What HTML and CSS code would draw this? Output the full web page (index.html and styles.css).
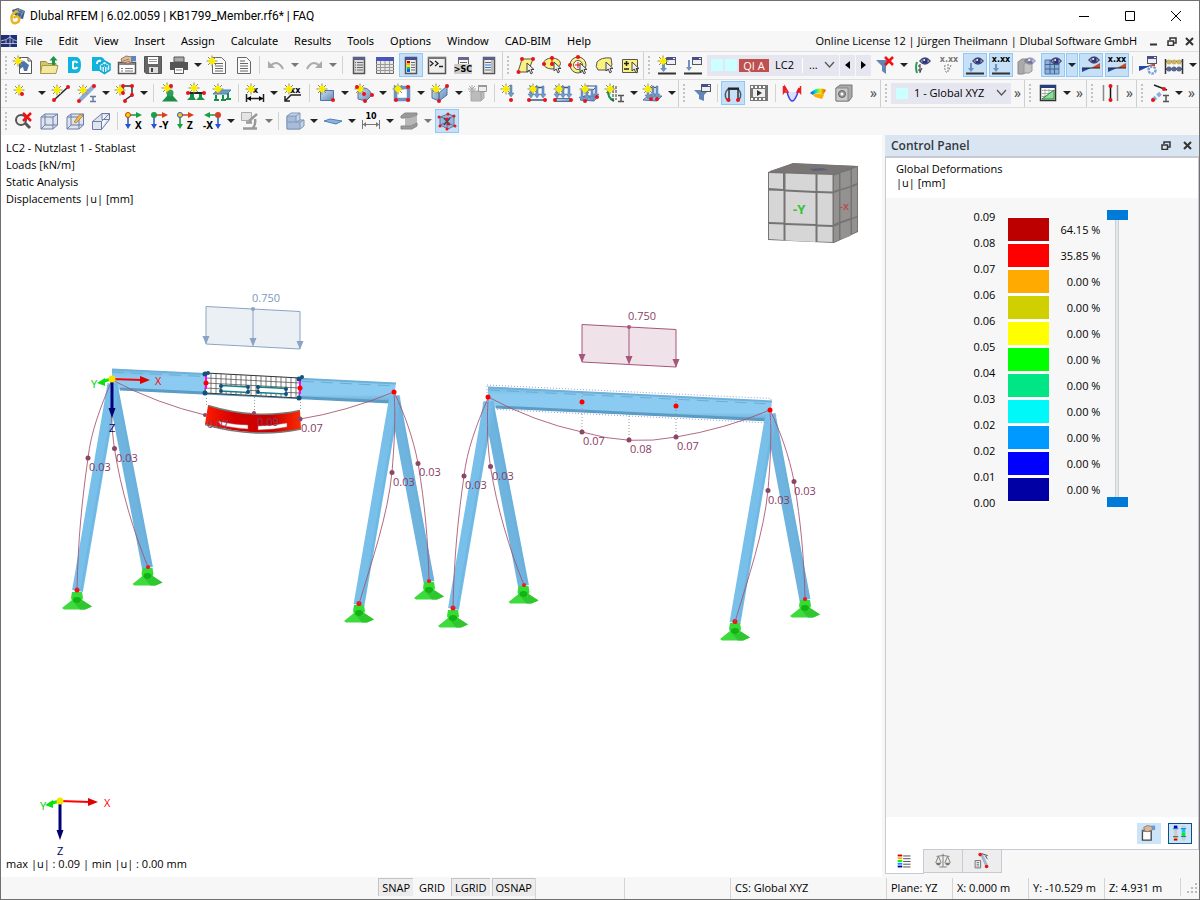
FILE: index.html
```html
<!DOCTYPE html>
<html lang="en">
<head>
<meta charset="utf-8">
<title>Dlubal RFEM</title>
<link rel="stylesheet" href="styles.css">
</head>
<body>
<svg class="defs" aria-hidden="true">
  <defs>
    <g id="star"><path d="M0-5.500V5.500M-5.500 0H5.500M-4-4L4 4M4-4L-4 4" stroke="#8d8a5c"/><circle r="3" fill="#fff200"/><path d="M0-4V4M-4 0H4" stroke="#f4e600"/></g>
    <circle id="node" r="2" fill="#e8141c"/>
    <g id="win"><rect x=".5" y=".5" width="9" height="7" fill="#eceff4" stroke="#555"/><path d="M0 0H10V3H0Z" fill="#4a4f86"/><path d="M7 1H9V2H7Z" fill="#fff"/></g>
    <g id="eye"><path d="M-5 0Q0-6 5 0Q0 6-5 0Z" fill="#fff" stroke="#4b4b78" stroke-width="1.5"/><circle r="2.8" fill="#2c347c"/><circle cx="-.8" cy="-1" r="1" fill="#fff"/></g>
    <path id="cursor" d="M0 0V9L2.200 7 4 11 5.500 10 4 6.500H7Z" fill="#eee" stroke="#444"/>
    <path id="load" d="M-1 0H1V8H3L0 12-3 8H-1Z" fill="#6f9bd0" stroke="#4f739f" stroke-width=".5"/>
    <path id="chev" d="M1 1L5.500 6 10 1" fill="none" stroke="#555" stroke-width="1.200"/>
    <g id="restore" fill="none" stroke="#333" stroke-width="1.500"><path d="M3 3V1H9V6H7"/><path d="M1 4H6.500V8.500H1Z"/></g>
    <path id="cross" d="M1 1L8 8M8 1L1 8" stroke="#333" stroke-width="2"/>
    <linearGradient id="steel" x1="0" y1="0" x2="1" y2="1"><stop offset="0" stop-color="#d4e2f2"/><stop offset="1" stop-color="#5f88b8"/></linearGradient>
    <linearGradient id="beam" x1="0" y1="0" x2="0" y2="1"><stop offset="0" stop-color="#74b9e2"/><stop offset=".25" stop-color="#8bcbf1"/><stop offset=".75" stop-color="#8bcbf1"/><stop offset="1" stop-color="#62a5cd"/></linearGradient>
    <linearGradient id="hot"><stop offset="0" stop-color="#ff1c00"/><stop offset=".3" stop-color="#d40000"/><stop offset=".7" stop-color="#c80000"/><stop offset="1" stop-color="#ff2a00"/></linearGradient>
    <linearGradient id="rainbow"><stop offset="0" stop-color="#1a2fff"/><stop offset=".35" stop-color="#00e0c0"/><stop offset=".65" stop-color="#d8f000"/><stop offset="1" stop-color="#ff3000"/></linearGradient>
    <g id="support"><path d="M-5 11L-15 19-13 20.500H8L15 17.500 5 11Z" fill="#3ddb3d"/><path d="M-5 11L3 20.500H8L15 17.500 5 11Z" fill="#2fc62f"/><path d="M-5 3H5L6 9 4 14H-4L-6 9Z" fill="#35dc35"/><ellipse cy="11" rx="4" ry="3" fill="#12b312"/></g>
    <g id="loadbox"><path d="M206 306.500L300 311.500V349L206 344Z" fill="currentColor" fill-opacity=".17" stroke="currentColor"/><path d="M253 309V345" stroke="currentColor"/><circle cx="253" cy="309" r="2" fill="currentColor"/><path d="M202.500 336H209.500L206 344.500ZM249.500 338H256.500L253 346.500ZM296.500 341H303.500L300 349.500Z" fill="currentColor"/></g>
    <g id="legs"><path d="M112 384L147.500 568M394 396L429 582" stroke="#6fb4de" stroke-width="11"/><path d="M113 384L77.500 591M395 396L359 605" stroke="#78c0ea" stroke-width="11"/><path d="M116 390L81 591M398 402L363 604M116 384L151 566M398 396L433 580" stroke="#66afdb" stroke-width="2" stroke-opacity=".5"/></g>
    <g id="girder"><path d="M112 369L396 383 393 403 122 390 112 389Z" fill="url(#beam)"/><path d="M112 369.500L396 383.500" stroke="#6fb0d8" stroke-width="2"/><path d="M112 372L396 386" stroke="#6aaed6" stroke-dasharray="12 7"/><path d="M120 389L391 402" stroke="#5a9cc4" stroke-width="3"/></g>
    <g id="feet"><use href="#support" x="77" y="589"/><use href="#support" x="147.500" y="565"/><use href="#support" x="359" y="602"/><use href="#support" x="429" y="579"/><g fill="#f01414"><circle cx="77" cy="590" r="2.500"/><circle cx="148" cy="567" r="2"/><circle cx="359" cy="603.500" r="2.500"/><circle cx="429" cy="581" r="2"/></g></g>
    <g id="legcurves"><path d="M112 380C100 408 91 432 88 458C82 500 78 540 77 590M112 380C111 405 111 425 114.500 449C121 490 133 530 148 567M394 392C396 420 394 447 392 472C388 515 372 560 359 604M394 392C405 415 413 438 418 463C425 505 428 540 429 580" class="curve"/><g fill="#8e4668"><circle cx="88" cy="458" r="2.500"/><circle cx="114.500" cy="448.500" r="2.500"/><circle cx="392" cy="472.500" r="2.500"/><circle cx="418" cy="463.500" r="2.500"/></g></g>
    <g id="triad" stroke-width="2"><path d="M0 0L30 1" stroke="#f00"/><path d="M28-3L38 1 28 5Z" fill="#e00000"/><path d="M0 0V30" stroke="#00007e" stroke-width="3"/><path d="M-3.500 29H3.500L0 39Z" fill="#00006e"/><path d="M0 0L-8 2" stroke="#0e0" stroke-width="3"/><path d="M-7-1L-15 4-7 7Z" fill="#0ce00c"/><circle r="3.500" fill="#f4e400"/></g>
  </defs>
</svg>
<div class="window">
  <header class="titlebar">
    <svg width="16" height="18" viewBox="0 0 16 18"><path d="M3 3L9 1 16 4 14 12 9 11 4 6Z" fill="#3d5f86"/><path d="M5 3L14 7M8 2L15 5M11 2L8 9M14 4L11 11" stroke="#8fa9c6" stroke-width=".7"/><path d="M9 4Q2 6 2.500 12Q3 17 7 16Q11 15 10 11Q8 8 4.500 11" fill="none" stroke="#e8b625" stroke-width="2.500"/></svg>
    <h1>Dlubal RFEM | 6.02.0059 | KB1799_Member.rf6* | FAQ</h1>
    <div class="wincontrols">
      <button aria-label="Minimize"><svg width="12" height="12"><path d="M1 6.500H11" stroke="#000"/></svg></button>
      <button aria-label="Maximize"><svg width="12" height="12"><path d="M1.500 1.500H10.500V10.500H1.500Z" fill="none" stroke="#000"/></svg></button>
      <button aria-label="Close"><svg width="12" height="12"><path d="M1 1L11 11M11 1L1 11" stroke="#000"/></svg></button>
    </div>
  </header>
  <nav class="menubar">
    <svg width="16" height="12"><path d="M0 0H16V12H0Z" fill="#1f2f78"/><path d="M0 8.500H16M0 6Q6 5 9 2Q12 5 16 6M9 0V12M5 5V9M12 5V9" stroke="#cfd6ea" fill="none" stroke-width=".8"/></svg>
    <div class="menus"><button>File</button><button>Edit</button><button>View</button><button>Insert</button><button>Assign</button><button>Calculate</button><button>Results</button><button>Tools</button><button>Options</button><button>Window</button><button>CAD-BIM</button><button>Help</button></div>
    <span class="license">Online License 12 | Jürgen Theilmann | Dlubal Software GmbH</span>
    <button aria-label="Minimize document"><svg width="9" height="9"><path d="M1 7.500H8" stroke="#333" stroke-width="2"/></svg></button>
    <button aria-label="Restore document"><svg width="10" height="9"><use href="#restore"/></svg></button>
    <button aria-label="Close document"><svg width="9" height="9"><use href="#cross"/></svg></button>
  </nav>

  <div class="toolrow">
    <div class="toolbar">
      <button class="t" aria-label="New model"><svg viewBox="0 0 24 24"><path d="M8.500 4.500H17L20.500 8V20.500H8.500Z" fill="#fff" stroke="#555"/><path d="M17 4.500V8H20.500" fill="none" stroke="#555"/><path d="M8 10L13 8 18 12 16 18H13L12 14 9 16Z" fill="#4d76a6"/><use href="#star" x="7" y="8"/></svg></button>
      <button class="t" aria-label="Open"><svg viewBox="0 0 24 24"><path d="M3.500 20.500V8.500H9L11 10.500H19V12.500" fill="#d3c56e" stroke="#9a8b45"/><path d="M3.500 20.500L5 12.500H21L19 20.500Z" fill="#f3e8a0" stroke="#a8994c"/><path d="M15 12V7.500H12.500L16.500 3 20.500 7.500H18V12Z" fill="#18964a"/></svg></button>
      <button class="t" aria-label="Dlubal Center"><svg viewBox="0 0 24 24"><path d="M5 4H14Q18 5 18 12T14 20H5Z" fill="#0db5df"/><path d="M14.500 10Q13 7.500 10 9V15Q13 16.500 14.500 14" fill="none" stroke="#fff" stroke-width="2"/></svg></button>
      <button class="t" aria-label="Block library"><svg viewBox="0 0 24 24"><path d="M3 4H12Q16 5 16 10L12 18H3Z" fill="#0db5df"/><path d="M12 8Q8 7 8 11" fill="none" stroke="#fff" stroke-width="2"/><path d="M15.500 8L21 11V17L15.500 20.500 10 17V11Z" fill="#ddf6fc" stroke="#12a9d3" stroke-width="1.500"/><path d="M10 11L15.500 14 21 11M15.500 14V20M12 10L19 14M19 10L12 14M13 12.500V18M18 12.500V18" fill="none" stroke="#12a9d3"/></svg></button>
      <button class="t" aria-label="Project manager"><svg viewBox="0 0 24 24"><path d="M3.500 9.500H20.500V20.500H3.500Z" fill="#fff" stroke="#555" stroke-width="1.500"/><path d="M4 10H20V12H4Z" fill="#888"/><path d="M6 15.500H8M6 18H8M10 15.500H18M10 18H18" stroke="#777"/><path d="M6 6L11 3 17 4V9L12 11 7 9Z" fill="#e2bb9c" stroke="#80634f" stroke-width=".8"/><path d="M8 8L14 6M9 10L15 8" stroke="#80634f" stroke-width=".7"/><path d="M16 3H21V8H16Z" fill="#5a86c4"/></svg></button>
      <button class="t" aria-label="Save"><svg viewBox="0 0 24 24"><path d="M3.500 3.500H20.500V20.500H5L3.500 19Z" fill="#666" stroke="#555"/><path d="M7 4H17V11H7Z" fill="#fff"/><path d="M8 6.500H16M8 8.500H16" stroke="#999"/><path d="M8 14H17V20H8Z" fill="#ddd"/><path d="M10 15H12V19H10Z" fill="#444"/></svg></button>
      <button class="t" aria-label="Print"><svg viewBox="0 0 24 24"><path d="M7 4H17V9H7Z" fill="#aaa" stroke="#555"/><path d="M3 9H21V17H3Z" fill="#555"/><path d="M7.500 14.500H16.500V20.500H7.500Z" fill="#fff" stroke="#555"/><path d="M9 17H15" stroke="#888"/></svg></button><button class="dd" aria-label="Print options"></button>
      <button class="t" aria-label="New printout report"><svg viewBox="0 0 24 24"><path class="doc" d="M7.500 4.500H16.500L20.500 8.500V20.500H7.500Z"/><path class="ln" d="M10 10.500H18M10 13H18M10 15.500H18M10 18H18"/><use href="#star" x="7" y="8"/></svg></button>
      <button class="t" aria-label="Printout report"><svg viewBox="0 0 24 24"><path class="doc" d="M6.500 4.500H15.500L19.500 8.500V20.500H6.500Z"/><path class="ln" d="M9 8H14M9 10.500H17M9 13H17M9 15.500H17M9 18H17"/></svg></button>
      <i class="sep"></i>
      <button class="t" aria-label="Undo"><svg viewBox="0 0 24 24"><path d="M6 13Q14 6 19 16" fill="none" stroke="#aaa" stroke-width="2"/><path d="M4 8V15H11Z" fill="#aaa"/></svg></button><button class="dd off" aria-label="Undo list"></button>
      <button class="t" aria-label="Redo"><svg viewBox="0 0 24 24"><path d="M18 13Q10 6 5 16" fill="none" stroke="#aaa" stroke-width="2"/><path d="M20 8V15H13Z" fill="#aaa"/></svg></button><button class="dd off" aria-label="Redo list"></button>
      <i class="sep"></i>
      <button class="t" aria-label="Navigator"><svg viewBox="0 0 24 24"><path d="M6.500 4.500H17.500V20.500H6.500Z" fill="#ddd" stroke="#555" stroke-width="1.500"/><path d="M6 4H18V7H6Z" fill="#5b5f8f"/><path class="ln" d="M10 9.500H16M10 12H16M10 14.500H16M10 17H16M8 9.500H9M8 12H9M8 14.500H9M8 17H9"/></svg></button>
      <button class="t" aria-label="Tables"><svg viewBox="0 0 24 24"><path d="M3.500 4.500H20.500V20.500H3.500Z" fill="#e8e8e8" stroke="#666"/><path d="M3 4H21V8H3Z" fill="#4a56b8"/><path d="M3 11.500H21M3 14.500H21M3 17.500H21M7.500 8V20M12 8V20M16.500 8V20" stroke="#999"/></svg></button>
      <button class="t on" aria-label="Control panel"><svg viewBox="0 0 24 24"><path d="M6.500 4.500H17.500V20.500H6.500Z" fill="#eee" stroke="#555" stroke-width="1.500"/><path d="M6 4H18V7H6Z" fill="#4a4f8f"/><path d="M8 8H11V10H8Z" fill="#c00"/><path d="M8 10H11V12H8Z" fill="#fa0"/><path d="M8 12H11V14H8Z" fill="#ee0"/><path d="M8 14H11V16H8Z" fill="#0c4"/><path d="M8 16H11V19H8Z" fill="#06f"/><path class="ln" d="M12 9.500H16M12 12H16M12 14.500H16M12 17H16"/></svg></button>
      <button class="t" aria-label="Console"><svg viewBox="0 0 24 24"><path d="M3.500 4.500H20.500V20.500H3.500Z" fill="#eee" stroke="#555" stroke-width="1.500"/><path d="M3 4H21V6H3Z" fill="#777"/><path d="M5 8L8 10.500 5 13M10 8L13 10.500 10 13M14 13.500H18" fill="none" stroke="#222" stroke-width="1.300"/></svg></button>
      <button class="t" aria-label="Scripts"><svg viewBox="0 0 24 24"><path class="doc" d="M7.500 4.500H17.500V12H7.500Z"/><path d="M7 4H18V7H7Z" fill="#66698c"/><path class="ln" d="M9 9.500H16"/><rect x="3" y="11" width="18" height="10" rx="1" fill="#ccc"/><text x="12" y="19" class="mini mid">&gt;SC</text></svg></button>
      <button class="t" aria-label="Side panel"><svg viewBox="0 0 24 24"><path d="M6.500 4.500H17.500V20.500H6.500Z" fill="#eee" stroke="#555" stroke-width="1.500"/><path d="M6 4H18V7H6Z" fill="#5b5f8f"/><path d="M14 7H17V20H14Z" fill="#bbb"/><path d="M8 9.500H14M8 17H14" class="ln"/><path d="M8 12H14M8 14.500H14" stroke="#3a78d0"/></svg></button>
    </div>
    <div class="toolbar">
      <button class="t" aria-label="Select by rectangle"><svg viewBox="0 0 24 24"><path class="y" d="M8 6H19L14 19H4Z"/><use href="#node" x="8" y="6"/><use href="#node" x="19" y="6"/><use href="#node" x="4.500" y="19"/><use href="#cursor" x="13" y="10"/></svg></button>
      <button class="t" aria-label="Select by ellipse"><svg viewBox="0 0 24 24"><ellipse class="y" cx="12" cy="10.500" rx="8.500" ry="5.500"/><path d="M12 3V13M2 11H6" stroke="#e00"/><use href="#node" x="12" y="5"/><use href="#node" x="4" y="11"/><use href="#node" x="12" y="11"/><use href="#cursor" x="14" y="9"/></svg></button>
      <button class="t" aria-label="Select by ring"><svg viewBox="0 0 24 24"><circle class="y" cx="12" cy="12" r="8"/><circle cx="12" cy="12" r="4.500" fill="#fff" stroke="#555"/><path d="M12 9V15M9 12H15" stroke="#e00"/><use href="#node" x="12" y="4"/><use href="#node" x="4" y="12"/><use href="#cursor" x="14" y="10"/></svg></button>
      <button class="t" aria-label="Select by polygon"><svg viewBox="0 0 24 24"><path class="y" d="M5 9Q9 4 19 5L20 12 16 17H6Q3 14 5 9Z"/><use href="#cursor" x="14" y="9"/></svg></button>
      <button class="t" aria-label="Special selection"><svg viewBox="0 0 24 24"><path class="y" d="M4.500 6.500H19.500V19.500H4.500Z"/><path d="M6 10.500H11M8.500 8V13M6 16H11" stroke="#222" stroke-width="1.500"/><use href="#cursor" x="14" y="9"/></svg></button>
    </div>
    <div class="toolbar">
      <button class="t" aria-label="New load case"><svg viewBox="0 0 24 24"><path d="M3 20.500H21" stroke="#333" stroke-width="2"/><path d="M7 7V15H5L8.500 19 12 15H10V7Z" fill="#6b92c2"/><use href="#win" x="11" y="4"/><use href="#star" x="8" y="8"/></svg></button>
      <button class="t" aria-label="Load cases"><svg viewBox="0 0 24 24"><path d="M3 20.500H21" stroke="#333" stroke-width="2"/><path d="M7 7V14H5L8 18 11 14H9V7Z" fill="#6b92c2"/><use href="#win" x="11" y="4"/></svg></button>
      <div class="combo case"><i class="swatch"></i><i class="swatch"></i><span class="tag">QI A</span><select aria-label="Load case"><option>LC2</option></select><span class="dots">...</span><svg width="11" height="8"><use href="#chev"/></svg></div>
      <button class="step" aria-label="Previous load case"><svg width="5" height="8"><path d="M5 0V8L0 4Z"/></svg></button>
      <button class="step" aria-label="Next load case"><svg width="5" height="8"><path d="M0 0V8L5 4Z"/></svg></button>
      <button class="t" aria-label="Clear filter"><svg viewBox="0 0 24 24"><path d="M3 7H18L13 13V21L9 18V13Z" fill="#5f86b5"/><path d="M12 4L20 12M20 4L12 12" stroke="#ee1212" stroke-width="2.500"/></svg></button><button class="dd" aria-label="Filter options"></button>
      <button class="t" aria-label="Show supports"><svg viewBox="0 0 24 24"><path d="M6 9Q4 14 6 20" fill="none" stroke="#2a9a52" stroke-width="2"/><path d="M9 11V20M9 13H7M9 17H7M11 15L9 19" stroke="#333"/><use href="#eye" x="14" y="8"/></svg></button>
      <button class="t" aria-label="Show values"><svg viewBox="0 0 24 24"><text x="12" y="9" class="mini mid g">x.xx</text><path d="M11 11V20M8 12Q7 17 10 20M14 12L12 17" stroke="#777" fill="none" stroke-dasharray="2 1"/></svg></button>
      <button class="t on" aria-label="Show loads"><svg viewBox="0 0 24 24"><path d="M3 20.500H21" stroke="#333" stroke-width="2"/><path d="M7 10V15H5L8 19 11 15H9V10Z" fill="#6b92c2"/><use href="#eye" x="15" y="8"/></svg></button>
      <button class="t on" aria-label="Show load values"><svg viewBox="0 0 24 24"><path d="M3 20.500H21" stroke="#333" stroke-width="2"/><text x="12" y="9" class="mini mid">x.xx</text><path d="M6 11V15H4L7 19 10 15H8V11Z" fill="#6b92c2"/></svg></button>
      <button class="t" aria-label="Show solids"><svg viewBox="0 0 24 24"><path d="M3 9L7 6H12V19L8 21H3Z" fill="#aaa" stroke="#888"/><path d="M9 11L12 9H17V18L14 20H9Z" fill="#c4c4c4" stroke="#999"/><g opacity=".5"><use href="#eye" x="15" y="8"/></g></svg></button>
      <button class="t on" aria-label="Show results"><svg viewBox="0 0 24 24"><path d="M4 7H18V21H4Z" fill="#8eb1da" stroke="#4f77a8"/><path d="M4 11.500H18M4 16H18M9 7V21M13.500 7V21" stroke="#3d6595"/><use href="#eye" x="15" y="8"/></svg></button><button class="dd on" aria-label="Result options"></button>
      <button class="t on" aria-label="Show diagrams"><svg viewBox="0 0 24 24"><path d="M3 15L12 15 3 19Z" fill="#2446a6"/><path d="M12 15L21 10V15Z" fill="#c84a2c"/><path d="M3 15H21" stroke="#222"/><use href="#eye" x="15" y="7"/></svg></button>
      <button class="t on" aria-label="Show diagram values"><svg viewBox="0 0 24 24"><text x="12" y="9" class="mini mid">x.xx</text><path d="M3 15L12 15 3 19Z" fill="#2446a6"/><path d="M12 15L21 10V15Z" fill="#c84a2c"/><path d="M3 15H21" stroke="#222"/></svg></button>
      <i class="sep tight"></i>
      <button class="t" aria-label="Result settings"><svg viewBox="0 0 24 24"><path d="M3 13L14 13 3 18Z" fill="#2446a6"/><path d="M11 13L19 10V13Z" fill="#c84a2c"/><use href="#win" x="11" y="3"/><circle cx="16" cy="17" r="3.500" fill="#fff" stroke="#7d9cda" stroke-width="2.500" stroke-dasharray="2.500 1"/></svg></button>
      <button class="t" aria-label="Calculator"><svg viewBox="0 0 24 24"><path d="M3.500 6V21M20.500 6V21M3 8.500H21M3 16H21" stroke="#333" stroke-width="1.500" fill="none"/><g fill="#c9b264"><circle cx="7" cy="9" r="2.500"/><circle cx="12" cy="9" r="2.500"/><circle cx="17" cy="9" r="2.500"/></g><g fill="#59668e"><circle cx="7" cy="16" r="2.500"/><circle cx="12" cy="16" r="2.500"/><circle cx="17" cy="16" r="2.500"/></g></svg></button><button class="dd" aria-label="Calculator options"></button>
    </div>
  </div>

  <div class="toolrow">
    <div class="toolbar">
      <button class="t" aria-label="New node"><svg viewBox="0 0 24 24"><use href="#star" x="8" y="9"/><use href="#node" x="11" y="13"/></svg></button><button class="dd" aria-label="Node options"></button>
      <button class="t" aria-label="New line"><svg viewBox="0 0 24 24"><path d="M5 19L18 7" stroke="#222" stroke-width="1.500"/><use href="#star" x="8" y="9"/><use href="#node" x="5" y="19"/><use href="#node" x="19" y="6"/></svg></button>
      <button class="t" aria-label="New member"><svg viewBox="0 0 24 24"><path d="M5 19L19 5" stroke="#8eadd4" stroke-width="4"/><use href="#star" x="8" y="9"/><use href="#node" x="4" y="20"/><use href="#node" x="19" y="5"/><path d="M15 15.500H21M18 15V20M15 20.500H21" stroke="#667ba0" stroke-width="1.500"/></svg></button><button class="dd" aria-label="Member options"></button>
      <button class="t" aria-label="New polyline"><svg viewBox="0 0 24 24"><path d="M10 12V5H19V14L12 19" fill="none" stroke="#333" stroke-width="1.500"/><use href="#star" x="7" y="9"/><use href="#node" x="10" y="5"/><use href="#node" x="19" y="5"/><use href="#node" x="10" y="12"/><use href="#node" x="19" y="14"/><use href="#node" x="12" y="20"/></svg></button><button class="dd" aria-label="Polyline options"></button>
      <i class="sep"></i>
      <button class="t" aria-label="Nodal support"><svg viewBox="0 0 24 24"><path d="M9 15L4 20.500H20L15 15V11H9Z" fill="#189048"/><circle cx="12" cy="12" r="3.500" fill="#2a9d58"/><use href="#star" x="9" y="7"/><use href="#node" x="13" y="5"/></svg></button>
      <button class="t" aria-label="Line support"><svg viewBox="0 0 24 24"><path d="M4 12H20" stroke="#222" stroke-width="2"/><path d="M6 13H10V16L12 19H3L6 16ZM15 13H18V16L21 19H12L15 16Z" fill="#189048"/><use href="#star" x="10" y="7"/><use href="#node" x="4" y="12"/><use href="#node" x="20" y="12"/></svg></button>
      <button class="t" aria-label="Surface support"><svg viewBox="0 0 24 24"><path d="M3 13L8 9H21L17 13Z" fill="#6e9fc9" stroke="#4d7fb0"/><path d="M6 14V18M4 19H9M13 14V18M11 19H16M18 12V17M16 18H21" stroke="#189048" stroke-width="2"/><use href="#star" x="8" y="8"/></svg></button>
      <i class="sep"></i>
      <button class="t" aria-label="New dimension"><svg viewBox="0 0 24 24"><path d="M3.500 13V21M20.500 13V21M4 17.500H20" stroke="#222" stroke-width="1.500"/><path d="M4 17.500L8 15V20ZM20 17.500L16 15V20Z"/><text x="10" y="12" class="mini">x</text><use href="#star" x="8" y="8"/></svg></button><button class="dd" aria-label="Dimension options"></button>
      <button class="t" aria-label="New note"><svg viewBox="0 0 24 24"><path d="M20 14H10L4 20M4 15V20H9" fill="none" stroke="#222" stroke-width="1.500"/><text x="9" y="12" class="mini">xx</text><use href="#star" x="8" y="8"/></svg></button>
      <i class="sep"></i>
      <button class="t" aria-label="New surface"><svg viewBox="0 0 24 24"><path class="b" d="M6.500 9.500H19.500V19.500H6.500Z"/><use href="#node" x="19" y="19"/><use href="#star" x="8" y="8"/></svg></button><button class="dd" aria-label="Surface options"></button>
      <button class="t" aria-label="New curved surface"><svg viewBox="0 0 24 24"><path class="b" d="M6 18V12Q7 7 12 7T20 14L14 20Z"/><use href="#star" x="8" y="8"/><use href="#node" x="5" y="6"/><use href="#node" x="20" y="14"/><use href="#node" x="13" y="20"/><use href="#node" x="12" y="13"/></svg></button><button class="dd" aria-label="Curved surface options"></button>
      <button class="t" aria-label="New opening"><svg viewBox="0 0 24 24"><path d="M5.500 6.500H18.500V18.500H5.500Z" fill="#fff" stroke="#6c93c2" stroke-width="3.500"/><use href="#star" x="8" y="8"/><use href="#node" x="18" y="6"/><use href="#node" x="18" y="19"/><use href="#node" x="6" y="19"/></svg></button><button class="dd" aria-label="Opening options"></button>
      <button class="t" aria-label="New solid"><svg viewBox="0 0 24 24"><path class="b" d="M4 9L11 12V20L4 17ZM11 12L19 5V14L11 20Z"/><use href="#star" x="8" y="8"/><use href="#node" x="19" y="5"/><use href="#node" x="11" y="20"/></svg></button><button class="dd" aria-label="Solid options"></button>
      <button class="t" aria-label="New solid set"><svg viewBox="0 0 24 24"><path d="M5 10H15V20H5ZM15 10L18 8V17L15 20Z" fill="#bbb" stroke="#aaa"/><path d="M12.500 4.500H20.500V10.500H12.500Z" fill="#eee" stroke="#999"/><path d="M12 4H21V6H12Z" fill="#999"/><path d="M2 8H10M6 4V12M3 5L9 11M9 5L3 11" stroke="#aaa"/></svg></button>
      <i class="sep"></i>
      <button class="t" aria-label="Nodal load"><svg viewBox="0 0 24 24"><use href="#load" x="12" y="4"/><use href="#node" x="12" y="19"/><use href="#star" x="7" y="8"/></svg></button>
      <button class="t" aria-label="Line load"><svg viewBox="0 0 24 24"><path d="M7 6.500H19M4 19H20" stroke="#37588a" stroke-width="1.500"/><use href="#load" x="12" y="5"/><use href="#load" x="18" y="5"/><use href="#load" x="6" y="5"/><use href="#node" x="4" y="19"/><use href="#node" x="20" y="19"/><use href="#star" x="8" y="8"/></svg></button>
      <button class="t" aria-label="Member load"><svg viewBox="0 0 24 24"><path d="M7 6.500H19" stroke="#37588a" stroke-width="1.500"/><path class="b" d="M4.500 17.500H19.500V20.500H4.500Z"/><use href="#load" x="12" y="5"/><use href="#load" x="18" y="5"/><use href="#load" x="6" y="5"/><use href="#node" x="4" y="19"/><use href="#node" x="20" y="19"/><use href="#star" x="8" y="8"/></svg></button>
      <button class="t" aria-label="Surface load"><svg viewBox="0 0 24 24"><path class="b" d="M3 19L7 15H21L17 20Z"/><path d="M4 9H16L20 5M8 5H20" stroke="#37588a" fill="none"/><use href="#load" x="15" y="8"/><use href="#load" x="19" y="5"/><use href="#load" x="10" y="7"/><use href="#load" x="5" y="8"/><use href="#node" x="8" y="20"/><use href="#node" x="20" y="16"/><use href="#star" x="8" y="8"/></svg></button>
      <button class="t" aria-label="Imposed deformation"><svg viewBox="0 0 24 24"><path d="M5 7Q4 17 11 20" fill="none" stroke="#189048" stroke-width="2"/><path d="M10 5V20M13 5V19" stroke="#333" stroke-dasharray="3 1"/><path d="M15 14.500H21M18 14V20M15 20.500H21" stroke="#555" stroke-width="1.500"/><use href="#star" x="7" y="8"/></svg></button><button class="dd" aria-label="Deformation options"></button>
      <button class="t" aria-label="Free load"><svg viewBox="0 0 24 24"><path class="b" d="M2 19L7 15H21L16 20Z"/><path d="M7 6.500H17" stroke="#37588a"/><use href="#load" x="7" y="6"/><use href="#load" x="12" y="5"/><use href="#load" x="16" y="5"/><use href="#node" x="10" y="18"/><use href="#node" x="16" y="18"/><use href="#star" x="7" y="8"/></svg></button><button class="dd" aria-label="Free load options"></button>
    </div>
    <div class="toolbar">
      <button class="t" aria-label="Filter"><svg viewBox="0 0 24 24"><path d="M4 9H19L14 14V20L9 18V14Z" fill="#5f86b5"/><use href="#win" x="11" y="3"/></svg></button>
      <i class="sep tight"></i>
      <button class="t on" aria-label="Deformation"><svg viewBox="0 0 24 24"><path d="M6 19Q2 13 7 8H17Q22 13 18 19" fill="none" stroke="#4a5570" stroke-width="1.500"/><path d="M8 19V8H17V19" fill="none" stroke="#333" stroke-width="1.500"/><path d="M7 7.500H18" stroke="#222" stroke-width="2"/><use href="#node" x="7.500" y="19"/><use href="#node" x="17" y="19"/></svg></button>
      <button class="t" aria-label="Animation"><svg viewBox="0 0 24 24"><path d="M3 4H21V20H3Z" fill="#777"/><path d="M6 8H18V16H6Z" fill="#eee"/><path d="M4 6H20M4 18H20" stroke="#fff" stroke-width="2" stroke-dasharray="2 2"/><path d="M10 9V15L15 12Z" fill="#333"/></svg></button>
      <i class="sep"></i>
      <button class="t" aria-label="Result diagram"><svg viewBox="0 0 24 24"><path d="M7 11Q12 29 18 11Z" fill="#dde0ff"/><path d="M7 11Q12 29 18 11" fill="none" stroke="#3840e0" stroke-width="1.500"/><path d="M3.500 5V12L5 10V6L8 11H4M20.500 5V12L19 10V7L17 11H20" fill="none" stroke="#ed1c24" stroke-width="1.500"/></svg></button>
      <button class="t" aria-label="Surface results"><svg viewBox="0 0 24 24"><path d="M4 12Q12 5 20 9L17 14Q12 10 7 14Z" fill="url(#rainbow)"/><path d="M7 14Q12 11 18 14L16 18 9 16Z" fill="#ffae00"/></svg></button>
      <button class="t" aria-label="Solid results"><svg viewBox="0 0 24 24"><path d="M4 7L8 4H20V16L17 20H4Z" fill="#aaa" stroke="#777"/><path d="M4 7H16V20H4Z" fill="#ccc" stroke="#888"/><circle cx="10" cy="13" r="3.500" fill="#999" stroke="#666"/><circle cx="10" cy="13" r="1.500" fill="#fff"/></svg></button>
      <button class="more far" aria-label="More result tools">»</button>
    </div>
    <div class="toolbar">
      <div class="combo axis"><i class="swatch"></i><select aria-label="Coordinate system"><option>1 - Global XYZ</option></select><svg width="11" height="8"><use href="#chev"/></svg></div>
      <button class="more" aria-label="More coordinate tools">»</button>
    </div>
    <div class="toolbar">
      <button class="t" aria-label="Work plane"><svg viewBox="0 0 24 24"><path d="M4.500 4.500H19.500V19.500H4.500Z" fill="#fff" stroke="#333" stroke-width="1.500"/><path d="M4 4H20V7H4Z" fill="#26407c"/><path d="M6 9.500H18M6 12.500H18M6 15.500H18M9 8V19M13 8V19" stroke="#aaa"/><path d="M6 18L18 9V18Z" fill="#91dc9b" stroke="#188a38"/></svg></button><button class="dd" aria-label="Work plane options"></button>
      <button class="more" aria-label="More plane tools">»</button>
    </div>
    <div class="toolbar">
      <button class="t" aria-label="Guidelines"><svg viewBox="0 0 24 24"><path d="M5.500 4V20M19.500 4V20" stroke="#888" stroke-width="1.500"/><path d="M12.500 4V20" stroke="#111" stroke-width="1.500"/><use href="#node" x="12.500" y="5"/><use href="#node" x="12.500" y="19"/></svg></button>
      <button class="more" aria-label="More guideline tools">»</button>
    </div>
    <div class="toolbar">
      <button class="t" aria-label="Member sections"><svg viewBox="0 0 24 24"><path d="M6 4L19 9" stroke="#222" stroke-width="1.500"/><use href="#node" x="16" y="8"/><path d="M5 19L14 11" stroke="#8eadd4" stroke-width="4" stroke-dasharray="4 2"/><use href="#node" x="5" y="19"/><path d="M15 14.500H21M18 14V20M15 20.500H21" stroke="#555" stroke-width="1.500"/></svg></button><button class="dd" aria-label="Section options"></button>
      <button class="more" aria-label="More section tools">»</button>
    </div>
  </div>

  <div class="toolrow last">
    <div class="toolbar">
      <button class="t" aria-label="Cancel zoom"><svg viewBox="0 0 24 24"><circle cx="10" cy="11" r="5" fill="#eee" stroke="#555" stroke-width="2"/><path d="M14 14L19 19" stroke="#555" stroke-width="3"/><path d="M12 4L20 12M20 4L12 12" stroke="#ee1212" stroke-width="2.500"/></svg></button>
      <button class="t" aria-label="Isometric view"><svg viewBox="0 0 24 24"><path class="w" d="M4 8L8 5H20.500V16L16 20H4Z"/><path class="w" d="M4 8H16V20M16 8L20.500 5M8 5V16H20.500M8 16L4 20"/></svg></button>
      <button class="t" aria-label="Edit view"><svg viewBox="0 0 24 24"><path class="w" d="M4 8L8 5H20.500V16L16 20H4Z"/><path class="w" d="M4 8H16V20M16 8L20.500 5M8 5V16H20.500M8 16L4 20"/><path d="M11 13L17 5 20 7 13 14Z" fill="#f2b84b" stroke="#a3742a" stroke-width=".7"/></svg></button>
      <button class="t" aria-label="Perspective view"><svg viewBox="0 0 24 24"><path class="w" d="M3.500 12.500H12.500V20.500H3.500ZM3.500 12.500L13 4.500H20.500L12.500 12.500M20.500 4.500V10.500L12.500 20.500M13 4.500V10.500H20.500"/></svg></button>
      <i class="sep"></i>
      <button class="t" aria-label="View in X"><svg viewBox="0 0 24 24"><path d="M6 6H15" stroke="#189048" stroke-width="1.500"/><path d="M14 3L20 6 14 9Z" fill="#18a048"/><path d="M6 6V16" stroke="#2852d0" stroke-width="1.500"/><path d="M3 15H9L6 20Z" fill="#2852d0"/><circle cx="6" cy="6" r="2.500" fill="#f5d100" stroke="#d33a10"/><text x="13" y="20" class="ax">X</text></svg></button>
      <button class="t" aria-label="View in minus Y"><svg viewBox="0 0 24 24"><path d="M6 6H15" stroke="#d6401c" stroke-width="1.500"/><path d="M14 3L20 6 14 9Z" fill="#d6401c"/><path d="M6 6V16" stroke="#2852d0" stroke-width="1.500"/><path d="M3 15H9L6 20Z" fill="#2852d0"/><circle cx="6" cy="6" r="3" fill="#18a048"/><text x="11" y="20" class="ax">-Y</text></svg></button>
      <button class="t" aria-label="View in Z"><svg viewBox="0 0 24 24"><path d="M6 6H15" stroke="#d6401c" stroke-width="1.500"/><path d="M14 3L20 6 14 9Z" fill="#d6401c"/><path d="M6 6V16" stroke="#189048" stroke-width="1.500"/><path d="M3 15H9L6 20Z" fill="#18a048"/><circle cx="6" cy="6" r="2.500" fill="#f5d100" stroke="#2852d0"/><text x="13" y="20" class="ax">Z</text></svg></button>
      <button class="t" aria-label="View in minus X"><svg viewBox="0 0 24 24"><path d="M18 6H9" stroke="#189048" stroke-width="1.500"/><path d="M10 3L4 6 10 9Z" fill="#18a048"/><path d="M18 6V16" stroke="#2852d0" stroke-width="1.500"/><path d="M15 15H21L18 20Z" fill="#2852d0"/><circle cx="18" cy="6" r="3" fill="#d6401c"/><text x="3" y="20" class="ax">-X</text></svg></button><button class="dd" aria-label="View options"></button>
      <button class="t" aria-label="Transparency"><svg viewBox="0 0 24 24"><path d="M3.500 3.500H13.500V11.500H3.500Z" fill="#e4e4e4" stroke="#aaa"/><path d="M19 5L11 12M5 19.500H19M8 13.500H14M17 10Q18 15 15 19" fill="none" stroke="#999" stroke-width="2.500"/></svg></button><button class="dd off" aria-label="Transparency options"></button>
      <i class="sep"></i>
      <button class="t" aria-label="Wireframe"><svg viewBox="0 0 24 24"><path d="M4 7L8 4H17V11H21V17L17 20H4Z" fill="#c6d4e8" stroke="#8095b8"/><path d="M4 7H13V13H17V20H4Z" fill="#a7bcd8" stroke="#8095b8"/><path d="M13 7L17 4M13 13L17 11M17 13L21 11M4 13H13" stroke="#8095b8"/></svg></button><button class="dd" aria-label="Display options"></button>
      <button class="t" aria-label="Clipping plane"><svg viewBox="0 0 24 24"><path d="M3 12L9 10 21 12 15 15Z" fill="#8db2dc" stroke="#4d7fb8"/></svg></button><button class="dd" aria-label="Clipping options"></button>
      <button class="t" aria-label="Dimensions"><svg viewBox="0 0 24 24"><path d="M3.500 11V20M20.500 11V20M4 15.500H20" stroke="#777"/><path d="M4 15.500L7 13V18ZM20 15.500L17 13V18Z" fill="#777"/><text x="12" y="10" class="mini mid">10</text></svg></button><button class="dd" aria-label="Dimension display"></button>
      <button class="t" aria-label="Section view"><svg viewBox="0 0 24 24"><path d="M4 7L8 4H20V6L16 9H4Z" fill="#999" stroke="#888"/><path d="M8 9H12L20 7V14L14 17H8Z" fill="#b8b8b8"/><path d="M4 17H14L20 14V17L15 20H4Z" fill="#999" stroke="#888"/></svg></button><button class="dd off" aria-label="Section view options"></button>
      <button class="t on" aria-label="Show mesh nodes"><svg viewBox="0 0 24 24"><path d="M5 8L13 5 19 7V17L13 20 5 16Z" fill="#9db4d4" stroke="#5d76a4"/><path d="M5 8L12 10 19 7M12 10V20M5 16L12 13 19 17" fill="none" stroke="#5d76a4"/><path d="M9 9L15 16M15 9L9 16" stroke="#3b4763" stroke-width="1.500"/><g transform="translate(12 12)" fill="#e8141c"><circle cx="-8" cy="-4" r="1.500"/><circle cx="1" cy="-7" r="1.500"/><circle cx="7" cy="-5" r="1.500"/><circle cx="-7" cy="5" r="1.500"/><circle cx="0" cy="8" r="1.500"/><circle cx="8" cy="5" r="1.500"/><circle cx="0" cy="-2" r="1.500"/><circle cx="1" cy="3" r="1.500"/></g></svg></button>
    </div>
  </div>

  <main class="work">
    <section class="viewport" aria-label="Model view">
      <svg class="scene" viewBox="1 135 881 742" preserveAspectRatio="xMinYMin meet">
        <use href="#loadbox" class="cblue"/>
        <text x="252" y="302" class="cblue">0.750</text>
        <use href="#loadbox" x="376" y="18" class="cred"/>
        <text x="628" y="320" class="cred">0.750</text>
        <g>
          <use href="#girder"/><use href="#legs"/><use href="#feet"/><use href="#legcurves"/>
          <path d="M112 380Q158 404 205 415M300 419Q345 412 394 392" class="curve"/>
          <path d="M206 373L300 378 299 398 205 393Z" fill="#fff" stroke="#333"/>
          <path d="M206 378L300 383M206 383L300 388M205 388L299 393M211 374V393M216 374V393M221 374V394M226 375V394M231 375V394M236 375V395M241 375V395M246 376V395M251 376V395M256 376V396M261 376V396M266 377V396M271 377V396M276 377V397M281 377V397M286 378V397M291 378V397M296 378V397" stroke="#555" stroke-width=".8"/>
          <path d="M221 385.500L248 387V392.500L221 391ZM258 387L286 388.500V394L258 392.500Z" fill="#fff" stroke="#16808a" stroke-width="1.500"/>
          <g fill="#15507a"><circle cx="221" cy="386" r="2"/><circle cx="248" cy="387" r="2"/><circle cx="221" cy="391" r="2"/><circle cx="248" cy="392" r="2"/><circle cx="258" cy="387" r="2"/><circle cx="286" cy="389" r="2"/><circle cx="258" cy="392" r="2"/><circle cx="286" cy="394" r="2"/><circle cx="205" cy="374" r="2.500"/><circle cx="208" cy="373" r="2"/><circle cx="205" cy="393" r="2.500"/><circle cx="299" cy="379" r="2.500"/><circle cx="302" cy="377" r="2"/><circle cx="299" cy="398" r="2.500"/></g>
          <path d="M206 376V391M300 381V395" stroke="#f0f" stroke-width="2" stroke-dasharray="5 3"/>
          <circle cx="206" cy="383" r="2.500" fill="red"/><circle cx="300" cy="388" r="2.500" fill="red"/><circle cx="394" cy="392" r="2.500" fill="red"/>
          <path d="M206.500 398V405M300.500 402V410M254.500 397V413" stroke="#999" stroke-dasharray="1 2"/>
          <path d="M208 405.500Q255 420 300 410.500L301 429.500Q255 438 205 424Z" fill="url(#hot)"/>
          <path d="M208 405.500Q255 420 300 410.500M205 424.500Q255 439 301 429" fill="none" stroke="#777" stroke-width="1.500"/>
          <path d="M218 421Q234 425 248 425V429Q232 428 221 425ZM258 426Q272 426 287 423V427Q272 430 258 430Z" fill="#fff" stroke="#b55" stroke-width=".5"/>
          <g fill="#8e4668"><circle cx="205" cy="415" r="2"/><circle cx="254" cy="413" r="2"/><circle cx="300" cy="419" r="2.500"/></g>
        </g>
        <g>
          <use href="#girder" x="376" y="18"/><use href="#legs" x="376" y="18"/><use href="#feet" x="376" y="18"/><use href="#legcurves" x="376" y="18"/>
          <path d="M487 385L771 398.500V423L487 409Z" fill="none" stroke="#99a0d8" stroke-dasharray="1 2"/>
          <path d="M488 397Q535 422 582 432Q630 446 676 437Q725 429 770 410" class="curve"/>
          <path d="M582 393V432M629 416V440M676 398V437" stroke="#999" stroke-dasharray="1 2"/>
          <g fill="#8e4668"><circle cx="582" cy="432" r="2.500"/><circle cx="629" cy="440" r="2.500"/><circle cx="676" cy="437" r="2.500"/></g>
          <g fill="red"><circle cx="488" cy="397" r="2.500"/><circle cx="582" cy="402" r="2.500"/><circle cx="676" cy="406" r="2.500"/><circle cx="770" cy="410" r="2.500"/></g>
        </g>
        <g class="values">
          <text x="207" y="428">0.07</text><text x="257" y="426">0.09</text><text x="301" y="432">0.07</text>
          <text x="89" y="471">0.03</text><text x="116" y="462">0.03</text><text x="393" y="486">0.03</text><text x="419" y="476">0.03</text>
          <text x="583" y="445">0.07</text><text x="630" y="453">0.08</text><text x="677" y="450">0.07</text>
          <text x="465" y="489">0.03</text><text x="492" y="480">0.03</text><text x="768" y="504">0.03</text><text x="794" y="495">0.03</text>
        </g>
        <use href="#triad" x="112" y="379"/>
        <text x="155" y="385" fill="red">X</text><text x="91" y="388" fill="#0c0">Y</text><text x="109" y="432" fill="#006">Z</text>
      </svg>
      <div class="caption">
        <p>LC2 - Nutzlast 1 - Stablast</p>
        <p>Loads [kN/m]</p>
        <p>Static Analysis</p>
        <p>Displacements |u| [mm]</p>
      </div>
      <svg class="cube" width="92" height="82" viewBox="767 162 92 82">
        <path d="M768 172L793 163 858 166V232L834 243 768 240Z" fill="#767373"/>
        <path d="M770 171L793 163.500 856 166 833 174Z" fill="#7a7676"/>
        <path d="M809 169L823 168 828 170 814 171Z" fill="#5b617d"/>
        <g fill="#d6d6d6"><path d="M769 173L783 173.500V189L769 188ZM785.500 173.500L815.500 174.500V191L785.500 189.500ZM817.500 174.500L832.500 175V191.500L817.500 191ZM769 190.500L783.500 191V222.500L769 222ZM785.500 191.500L815.500 193V224L785.500 223ZM817.500 193L832.500 193.500V225L817.500 224.500ZM769 224L783.500 224.500V240L769 239ZM785.500 225L815.500 226V242L785.500 240.500ZM817.500 226.500L832.500 227V242L817.500 241.500Z"/></g>
        <g fill="#949191"><path d="M834 175.500L839 174V189L834 191ZM840.500 173L850.500 170V186L840.500 189ZM852 169L857 167V183L852 185ZM834 193L839 191V222L834 224ZM840.500 190.500L850.500 187.500V218L840.500 221.500ZM852 187L857 185V216L852 218ZM834 226.500L839 224.500V240L834 242ZM840.500 223.500L850.500 220V236L840.500 239.500ZM852 219.500L857 217.500V231L852 234Z"/></g>
        <text x="793" y="214" class="cubey">-Y</text><text x="840" y="210" class="cubex">-X</text>
      </svg>
      <div class="corner">
        <svg width="80" height="66" viewBox="36 790 80 66"><use href="#triad" x="60" y="801"/><text x="104" y="807" fill="red">X</text><text x="40" y="810" fill="#0c0">Y</text><text x="57" y="855" fill="#006">Z</text></svg>
        <p>max |u| : 0.09 | min |u| : 0.00 mm</p>
      </div>
    </section>

    <aside class="panel">
      <header><h2>Control Panel</h2><button aria-label="Float panel"><svg width="10" height="9"><use href="#restore"/></svg></button><button aria-label="Close panel"><svg width="9" height="9"><use href="#cross"/></svg></button></header>
      <div class="body">
        <div class="about"><p>Global Deformations</p><p>|u| [mm]</p></div>
        <div class="legend">
          <ol class="limits"><li>0.09</li><li>0.08</li><li>0.07</li><li>0.06</li><li>0.06</li><li>0.05</li><li>0.04</li><li>0.03</li><li>0.02</li><li>0.02</li><li>0.01</li><li>0.00</li></ol>
          <ol class="bands"><li style="background-color:#bc0000"></li><li style="background-color:#ff0000"></li><li style="background-color:#ffaa00"></li><li style="background-color:#d0d000"></li><li style="background-color:#ffff00"></li><li style="background-color:#00ff00"></li><li style="background-color:#00e687"></li><li style="background-color:#00f8f8"></li><li style="background-color:#0099ff"></li><li style="background-color:#0000ff"></li><li style="background-color:#0000a5"></li></ol>
          <ol class="shares"><li>64.15 %</li><li>35.85 %</li><li>0.00 %</li><li>0.00 %</li><li>0.00 %</li><li>0.00 %</li><li>0.00 %</li><li>0.00 %</li><li>0.00 %</li><li>0.00 %</li><li>0.00 %</li></ol>
          <div class="range"><input type="range" aria-label="Upper limit" value="100"><input type="range" aria-label="Lower limit" value="0"></div>
        </div>
        <div class="actions">
          <button class="t" aria-label="Panel options"><svg viewBox="0 0 24 24"><path d="M4.500 8.500H14.500V19.500H4.500Z" fill="#fff" stroke="#444" stroke-width="1.500"/><path d="M4 8H15V10H4Z" fill="#666"/><path d="M6 5L10 3 16 4 16 8 10 10 7 9Z" fill="#d8b89c" stroke="#8b7465"/><path d="M15 3H19V8H15Z" fill="#6d96cb"/></svg></button>
          <button class="t pick" aria-label="Value filter"><svg viewBox="0 0 24 24"><path d="M5 3H9V20H5ZM14 3H18V20H14Z" fill="#ccc"/><path d="M5 3H9V6H5Z" fill="#00c"/><path d="M5 16H9V18H5Z" fill="#fa0"/><path d="M5 18H9V20H5Z" fill="#c00"/><path d="M14 7H18V11H14Z" fill="#0cf"/><path d="M14 11H18V15H14Z" fill="#0e2"/><path d="M4 6.500H10M4 15.500H10M13 6.500H19M13 15.500H19" stroke="#06c"/></svg></button>
        </div>
      </div>
      <div class="tabs" role="tablist">
        <button role="tab" aria-selected="true" aria-label="Color scale"><svg viewBox="0 0 24 24"><path d="M4 6H9" stroke="#c00" stroke-width="2"/><path d="M4 9H9" stroke="#fa0" stroke-width="2"/><path d="M4 12H9" stroke="#0e0" stroke-width="2"/><path d="M4 15H9" stroke="#09f" stroke-width="2"/><path d="M4 18H9" stroke="#00a" stroke-width="2"/><path d="M10 6.500H18M10 9.500H18M10 12.500H18M10 15.500H18M10 18.500H18" stroke="#444"/></svg></button>
        <button role="tab" aria-label="Factors"><svg viewBox="0 0 24 24"><path d="M12 4V18M8 18.500H16M5 7L12 6 19 7M7 7L4 14M7 7L10 14M17 7L14 14M17 7L20 14" fill="none" stroke="#777"/><path d="M4 14H10Q9 17 7 17T4 14ZM14 14H20Q19 17 17 17T14 14Z" fill="#777"/></svg></button>
        <button role="tab" aria-label="Filter"><svg viewBox="0 0 24 24"><path d="M11 4L17 17" stroke="#a3b4d0" stroke-width="3"/><use href="#node" x="10" y="5"/><use href="#node" x="17" y="18"/><path class="doc" d="M4.500 11.500H10.500V19.500H4.500Z"/><path class="ln" d="M6 13.500H9M6 15.500H9M6 17.500H9"/><path d="M12 4L18 6 16 7 18 10" fill="#ccc" stroke="#555"/></svg></button>
      </div>
    </aside>
  </main>

  <footer class="status">
    <div class="snaps"><button class="down">SNAP</button><button>GRID</button><button class="down">LGRID</button><button class="down">OSNAP</button></div>
    <span class="c1"></span><span class="c2"></span><span class="c3">CS: Global XYZ</span><span class="c4">Plane: YZ</span><span class="c5">X: 0.000 m</span><span class="c5">Y: -10.529 m</span><span class="c5">Z: 4.931 m</span>
    <svg class="grip" width="19" height="18"><path d="M14 5H16V7H14ZM14 9H16V11H14ZM14 13H16V15H14ZM10 9H12V11H10ZM10 13H12V15H10ZM6 13H8V15H6Z" fill="#bbb"/></svg>
  </footer>
</div>
</body>
</html>
```
FILE: styles.css
```css
* { box-sizing: border-box; }
html, body { height: 100%; margin: 0; }
body { font: 11px/16px "Open Sans", "Noto Sans", sans-serif; color: #000; background: #f7f7f7; }
p, h1, h2, ol { margin: 0; padding: 0; font-weight: 400; list-style: none; }
button { border: 0; padding: 0; margin: 0; background: none; font: inherit; color: inherit; }
button svg { display: block; margin: auto; }
select { appearance: none; border: 0; padding: 0; background: none; font: inherit; color: inherit; }
.defs { position: absolute; width: 0; height: 0; }

.window { min-height: 100%; display: flex; flex-direction: column; border: 1px solid #707070; }
.titlebar { height: 30px; display: flex; align-items: center; background: #fff; padding-left: 8px; gap: 5px; }
.titlebar h1 { flex: 1; font: 12px/18px Roboto, "Open Sans", sans-serif; }
.wincontrols { display: flex; }
.wincontrols button { width: 46px; height: 29px; }

.menubar { height: 20px; display: flex; align-items: center; }
.menus { display: flex; flex: 1; padding-left: 8px; gap: 16px; font-family: "Noto Sans", "Open Sans", sans-serif; }
.license { padding-right: 12px; }
.menubar > button { width: 9px; margin-right: 9px; }
.menubar > button:last-child { margin-right: 5px; }

.toolrow { display: flex; height: 28px; border-top: 1px solid #dedede; }
.toolbar { display: flex; align-items: center; padding-bottom: 1px; border-right: 1px solid #d0d0d0; }
.last .toolbar, .toolbar:last-child { border-right: 0; }
.toolbar::before { content: ""; width: 2px; height: 19px; margin: 0 4px; background: repeating-linear-gradient(#c4c4c4 0 2px, transparent 2px 4px); flex: none; }
.toolbar:first-child::before { margin-right: 3px; }
.t { width: 24px; height: 24px; margin: 0 1px; flex: none; }
.t svg { width: 24px; height: 24px; }
.t.on, .dd.on { background: #c5e0f7; box-shadow: inset 0 0 0 1px #90c8f6; }
.dd { width: 12px; height: 24px; display: grid; place-items: center; flex: none; }
.dd::before { content: ""; border: 4px solid transparent; border-top-color: #222; border-bottom: 0; }
.dd.off::before { border-top-color: #777; }
.sep { width: 1px; height: 18px; margin: 0 3px; background: #d2d2d2; flex: none; }
.sep.tight { margin: 0 2px; }
.more { width: 13px; font-size: 14px; color: #444; flex: none; }
.more.far { margin-left: 10px; }
.combo { display: flex; align-items: center; height: 21px; background: #e6e6f1; flex: none; }
.swatch { width: 12px; height: 12px; background: #ccffff; flex: none; }
.case { width: 132px; margin: 0 1px; padding: 0 4px; gap: 2px; }
.case select { flex: 1; min-width: 0; padding-left: 4px; }
.case .dots { width: 20px; height: 15px; line-height: 13px; padding-left: 6px; border-left: 1px solid #fff; flex: none; }
.tag { width: 30px; height: 13px; line-height: 13px; text-align: center; color: #fff; background: #c0504d; flex: none; }
.axis { width: 120px; padding: 0 4px 0 5px; gap: 6px; }
.axis .swatch { height: 11px; }
.axis select { flex: 1; min-width: 0; }
.step { width: 15px; height: 21px; margin-right: 1px; background: #e6e6f1; flex: none; }
.doc { fill: #fafafa; stroke: #666; }
.ln { stroke: #666; fill: none; }
.y { fill: #fbf27e; stroke: #555; }
.b { fill: url(#steel); stroke: #4f75a5; }
.w { fill: #cdd8ea; fill-opacity: .6; stroke: #6d7ca6; }
.mini { font: bold 8px "DejaVu Sans", sans-serif; }
.mid { text-anchor: middle; }
.mini.g { fill: #777; }
.ax { font: bold 10px "Noto Sans", sans-serif; }

.work { flex: 1; display: flex; gap: 3px; }
.viewport { flex: 1; position: relative; background: #fff; overflow: hidden; }
.scene { display: block; width: 100%; }
.scene .cblue { color: #8aa4c6; fill: #7d99bf; }
.scene .cred { color: #a6557c; fill: #8e3f63; }
.curve { fill: none; stroke: #a3506f; stroke-opacity: .85; }
.values { fill: #8a3a60; }
.caption { position: absolute; left: 5px; top: 4px; line-height: 17px; }
.cube { position: absolute; right: 23px; top: 27px; }
.cubey { font: bold 13px "Noto Sans", sans-serif; fill: #36c236; }
.cubex { font: bold 9px "Noto Sans", sans-serif; fill: #b45050; }
.corner { position: absolute; left: 5px; bottom: 5px; }
.corner svg { display: block; margin-left: 30px; }

.panel { width: 314px; display: flex; flex-direction: column; }
.panel header { height: 21px; display: flex; align-items: center; padding: 0 7px 0 6px; gap: 12px; background: #d9e6f2; }
.panel h2 { flex: 1; font: 600 12px/18px "Open Sans", sans-serif; color: #33383f; }
.body { flex: 1; display: flex; flex-direction: column; border: solid #c9c9d3; border-width: 2px 1px 1px 1px; }
.about { height: 40px; padding: 4px 10px; background: #fff; line-height: 14px; }
.legend { flex: 1; display: flex; justify-content: center; align-items: flex-start; padding: 6px 0 0 18px; line-height: 26px; }
.bands { width: 41px; margin: 13px 0 0 13px; background: #fff; }
.bands li { height: 26px; border: solid rgba(255,255,255,.5); border-width: 1px 0; background-clip: content-box; padding-bottom: 1px; }
.shares { width: 51px; margin-top: 13px; text-align: right; }
.range { display: grid; width: 21px; height: 297px; margin: 6px 0 0 7px; background: linear-gradient(90deg, transparent 8px, #ccd1d1 8px 9px, #e2e8e8 9px 11px, #ccd1d1 11px 12px, transparent 12px); }
.range input { grid-area: 1 / 1; appearance: none; writing-mode: vertical-lr; direction: rtl; width: 21px; height: 297px; margin: 0; background: none; pointer-events: none; }
.range input::-webkit-slider-thumb { appearance: none; width: 21px; height: 10px; background: #007ad9; pointer-events: auto; }
.actions { display: flex; justify-content: flex-end; gap: 7px; padding: 6px 6px 5px 0; background: #fff; }
.actions .t { height: 21px; margin: 0; background: #cce4f7; }
.actions .t svg { height: 21px; }
.actions .pick { box-shadow: inset 0 0 0 1px #0a4f8f; }
.tabs { display: flex; height: 27px; align-items: flex-start; }
.tabs button { width: 39px; height: 23px; background: #ededed; border: solid #c9c9d3; border-width: 0 1px 1px 0; }
.tabs button[aria-selected] { height: 25px; background: #fff; border-left-width: 1px; margin-top: -1px; }
.tabs svg { width: 24px; height: 22px; }

.status { height: 22px; display: flex; line-height: 17px; padding-top: 1px; }
.snaps { flex: 1; display: flex; justify-content: flex-end; gap: 2px; }
.snaps button { height: 18px; padding: 0 4px; }
.snaps .down { padding: 0 3px; background: #ececec; border: solid #c4c4c4; border-width: 1px 0 0 1px; }
.status span { border-left: 1px solid #d4d4d4; padding-left: 4px; line-height: 20px; }
.c1 { width: 89px; }
.c2 { width: 106px; }
.c3 { width: 156px; }
.c4 { width: 66px; }
.c5 { width: 76px; }
.grip { border-left: 1px solid #d4d4d4; }
```
